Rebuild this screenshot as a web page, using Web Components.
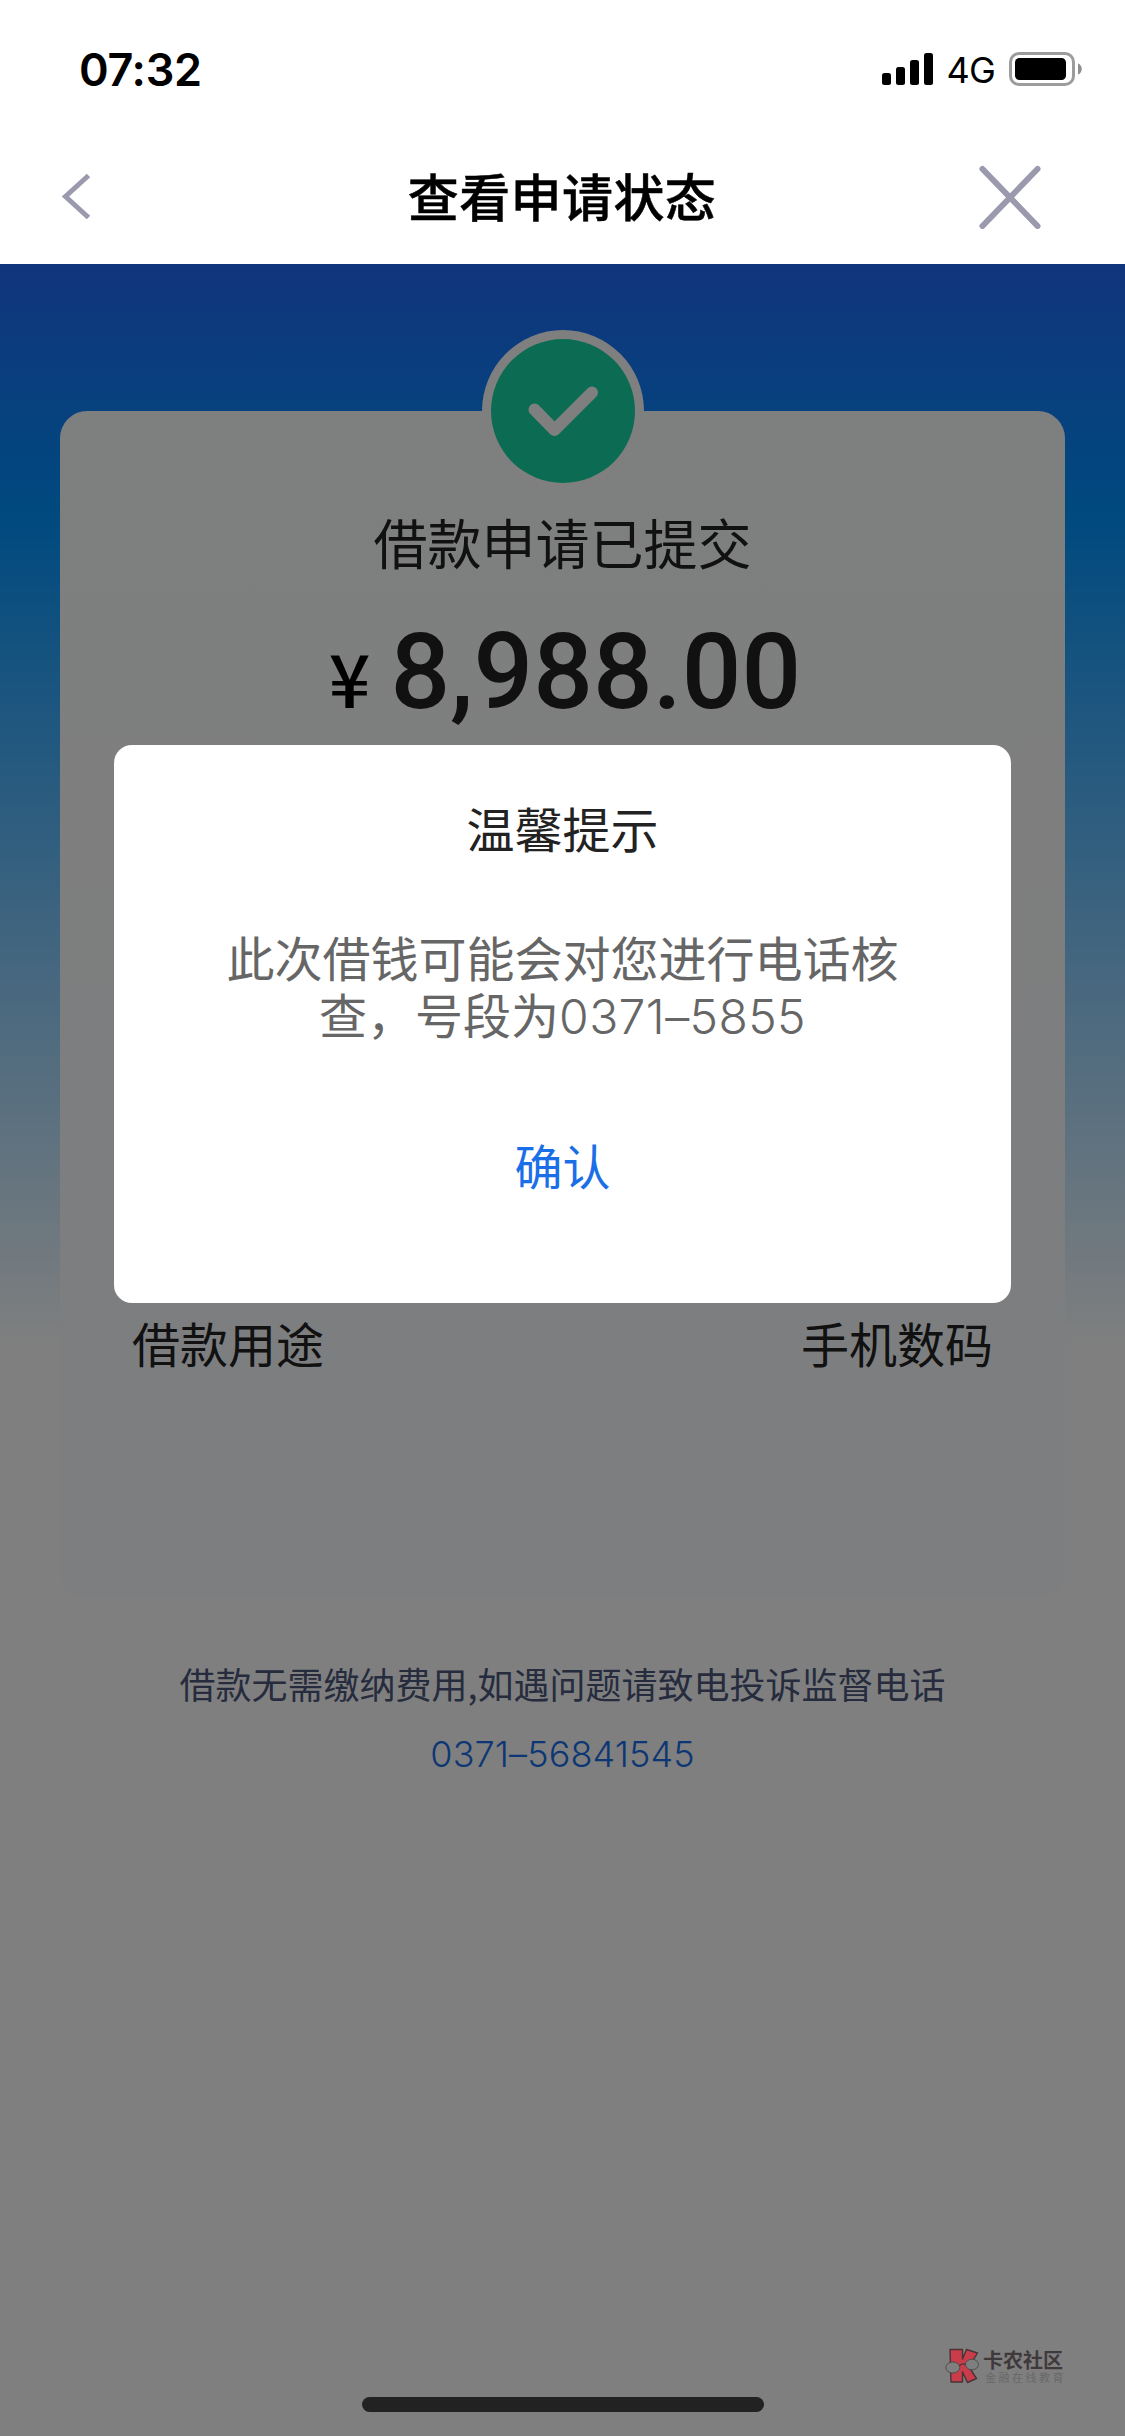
<!DOCTYPE html>
<html lang="zh-CN">
<head>
<meta charset="utf-8">
<title>查看申请状态</title>
<style>
html,body{margin:0;padding:0}
body{width:1125px;height:2436px;overflow:hidden;font-family:"Noto Sans CJK SC",sans-serif;color:#222;background:#fff}
</style>
</head>
<body>
<loan-app></loan-app>
<script>
const define=(name,html)=>customElements.define(name,class extends HTMLElement{
  constructor(){super();this.attachShadow({mode:"open"}).innerHTML=html;}
});

define("status-bar",`<style>
:host{display:flex;align-items:center;justify-content:space-between;height:132px;box-sizing:border-box;padding:6px 43px 0 79px;color:#000;font-family:Inter,sans-serif}
.time{font-size:45px;font-weight:600;letter-spacing:-.3px}
.right{display:flex;align-items:center}
.net{font-size:36px;margin:2px 14px 0 13px;letter-spacing:-.8px}
svg{display:block}
</style>
<span class="time">07:32</span>
<span class="right">
<svg width="51" height="34" viewBox="0 0 51 34"><rect y="21" width="9" height="12" rx="2.5"/><rect x="14" y="15" width="9" height="18" rx="2.5"/><rect x="28" y="8" width="9" height="25" rx="2.5"/><rect x="42" y="1" width="9" height="32" rx="2.5"/></svg>
<span class="net">4G</span>
<svg width="73" height="34" viewBox="0 0 73 34"><rect x="1.5" y="1.5" width="63" height="31" rx="8.5" fill="none" stroke="#9c9c9c" stroke-width="3"/><rect x="6" y="6" width="51" height="22" rx="4.5"/><path d="M69 11.5C74 13 74 21 69 22.5Z" fill="#8f8f8f"/></svg>
</span>`);

define("nav-bar",`<style>
:host{display:flex;align-items:center;justify-content:space-between;height:132px;box-sizing:border-box;padding:0 84px 3px 61px;color:#000}
h1{margin:0;font-size:51px;line-height:60px;letter-spacing:.4px;padding-left:54px;padding-bottom:3px;font-weight:500;-webkit-text-stroke:.5px #000}
svg{display:block;fill:none;stroke:#9a99ad}
.back{padding-bottom:2px}
</style>
<svg class="back" width="30" height="46" viewBox="0 0 30 46"><path d="M27.500 2.500L4.500 23.500L27.500 44.500" stroke-width="5"/></svg>
<h1><slot></slot></h1>
<svg width="62" height="64" viewBox="0 0 62 64"><path d="M3.500 4L58.500 61M58.500 4L3.500 61" stroke-width="6" stroke-linecap="round"/></svg>`);

define("success-badge",`<style>
:host{display:block;width:162px;height:162px}svg{display:block}
</style><svg width="162" height="162" viewBox="0 0 162 162"><circle cx="81" cy="81" r="81" fill="#fff"/><circle cx="81" cy="81" r="72" fill="#16d8a6"/><path d="M52.500 79.500L72.500 100L110 62.500" fill="none" stroke="#fff" stroke-width="12" stroke-linecap="round" stroke-linejoin="round"/></svg>`);

define("money-amount",`<style>
:host{display:flex;align-items:baseline;justify-content:center;height:124px;line-height:124px}
.cur{font-size:73px;font-weight:500;color:#000;margin:0 20px 0 5px}
.num{font:500 105px/124px Roboto,sans-serif}
</style><span class="cur">¥</span><span class="num"><slot></slot></span>`);

define("info-row",`<style>
:host{display:flex;justify-content:space-between;padding:0 72px;font-size:48px;line-height:72px}
</style><slot name="label"></slot><slot name="value"></slot>`);

define("result-card",`<style>
:host{display:flex;flex-direction:column;box-sizing:border-box;width:1005px;height:1187px;border-radius:27px;background:linear-gradient(#fdfeff,#fafcff)}
success-badge{margin:-81px auto 0}
h2{margin:10px 0 0;text-align:center;font-size:54px;line-height:80px;font-weight:400}
money-amount{margin-top:29px}
.rows{margin-top:571px}
</style>
<success-badge></success-badge>
<h2>借款申请已提交</h2>
<money-amount>8,988.00</money-amount>
<div class="rows"><slot></slot></div>`);

define("hotline-note",`<style>
:host{display:block;text-align:center;font-size:36px;line-height:54px;color:#4c587c}
.tel{margin-top:17px;font-family:Inter,sans-serif;font-weight:350;color:#1a6fe8;letter-spacing:.1px}
</style><div><slot></slot></div><div class="tel"><slot name="tel"></slot></div>`);

define("alert-dialog",`<style>
:host{display:flex;flex-direction:column;align-items:center;box-sizing:border-box;width:897px;height:558px;border-radius:18px;background:#fff;padding-top:47px;font-size:48px}
.title{line-height:70px;color:#222}
.msg{margin-top:66px;width:680px;line-height:57px;color:#666;text-align:center}
.ok{margin-top:84px;line-height:70px;color:#1a6fe8}
</style>
<div class="title"><slot name="title"></slot></div>
<div class="msg"><slot></slot></div>
<div class="ok"><slot name="action"></slot></div>`);

define("site-mark",`<style>
:host{display:flex;gap:3px;align-items:center;color:#3f393b}
svg{display:block}
.t{display:flex;flex-direction:column;align-items:flex-start}
.a{font-size:20px;line-height:21px;font-weight:700}
.b{font-size:11px;line-height:12px;letter-spacing:2.500px;color:#686868;margin:1px 0 0 2px}
</style>
<svg width="35" height="36" viewBox="0 0 35 36"><path d="M5 1.500H17.500V11L21.500 1.500L32.500 5L24 19L31.500 30.500L22.500 34.500L17.500 24V34H6Z" fill="#c83d49" stroke="#493337" stroke-width="1.400" stroke-linejoin="round"/><ellipse cx="7.800" cy="19.500" rx="7" ry="5.500" fill="#7f7f7f" stroke="#4c4c4c" stroke-width="1"/><ellipse cx="27" cy="16.500" rx="6.500" ry="5.300" fill="#7f7f7f" stroke="#4c4c4c" stroke-width="1"/><path d="M14.500 17.500Q17.500 15 20.500 16.500" fill="none" stroke="#493337" stroke-width="1.200"/></svg>
<div class="t"><span class="a">卡农社区</span><span class="b">金融在线教育</span></div>`);

define("loan-app",`<style>
:host{display:flex;flex-direction:column;width:1125px;height:2436px}
main{position:relative;height:2172px;box-sizing:border-box;padding:147px 60px 0;background:linear-gradient(#226afa,#0094ff 252px,#fff 1085px)}
hotline-note{margin-top:58px}
.mask{position:absolute;inset:0;background:rgba(0,0,0,.5);display:flex;justify-content:center;align-items:flex-start;padding-top:481px}
site-mark{position:absolute;left:945px;top:2084px}
.home{position:absolute;left:362px;bottom:24px;width:402px;height:15px;border-radius:8px;background:#222}
.line{display:block;white-space:nowrap}
.d{font-family:Inter,sans-serif;font-weight:350;letter-spacing:.4px}
</style>
<status-bar></status-bar>
<nav-bar>查看申请状态</nav-bar>
<main>
<result-card><info-row><span slot="label">借款用途</span><span slot="value">手机数码</span></info-row></result-card>
<hotline-note>借款无需缴纳费用,如遇问题请致电投诉监督电话<span slot="tel">0371–56841545</span></hotline-note>
<div class="mask"><alert-dialog><span slot="title">温馨提示</span><span class="line">此次借钱可能会对您进行电话核</span><span class="line">查，号段为<span class="d">0371–5855</span></span><span slot="action">确认</span></alert-dialog></div>
<site-mark></site-mark>
<div class="home"></div>
</main>`);
</script>
</body>
</html>
